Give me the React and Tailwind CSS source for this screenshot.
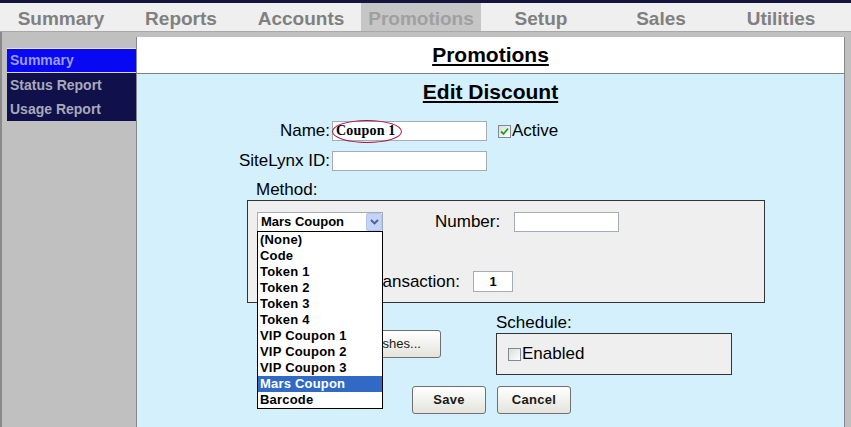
import React from 'react';

const tabs = ['Summary', 'Reports', 'Accounts', 'Promotions', 'Setup', 'Sales', 'Utilities'];
const methods = ['(None)', 'Code', 'Token 1', 'Token 2', 'Token 3', 'Token 4', 'VIP Coupon 1', 'VIP Coupon 2', 'VIP Coupon 3', 'Mars Coupon', 'Barcode'];

// XP style checkbox
const CheckBox = ({ checked }) => (
  <span className="inline-flex w-[13px] h-[13px] shrink-0 items-center justify-center border border-[#7f8a99] bg-linear-to-br from-[#dcdcd7] to-white">
    {checked && (
      <svg width="9" height="9" viewBox="0 0 9 9">
        <path d="M1 4.5 L3.5 7 L8 1.5" stroke="#21a121" strokeWidth="1.8" fill="none" />
      </svg>
    )}
  </span>
);

const XpButton = ({ children, className = '' }) => (
  <button className={`h-[28px] rounded-[3px] border border-[#707070] bg-linear-to-b from-white to-[#e4e4dc] text-[13px] text-[#1a1a1a] ${className}`}>
    {children}
  </button>
);

const TextInput = ({ className = '', children }) => (
  <div className={`relative h-[20px] bg-white border border-[#a5acb5] ${className}`}>{children}</div>
);

export default function App() {
  return (
    <div className="w-[851px] h-[427px] overflow-hidden bg-[#c0c0c0] font-['Liberation_Sans',Arial,sans-serif] text-black flex flex-col">
      {/* top strip + tabs */}
      <div className="h-[3px] bg-[#14143c]" />
      <div className="h-[29px] bg-[#efefef] border-b border-[#a8a8a8] flex pl-[1px]">
        {tabs.map((t) => (
          <div
            key={t}
            className={`w-[120px] pt-[4px] flex items-center justify-center text-[19px] font-bold ${t === 'Promotions' ? 'bg-[#c6c6c6] text-[#a0a0a0]' : 'text-[#808080]'}`}
          >
            {t}
          </div>
        ))}
      </div>

      <div className="flex-1 flex border-l-2 border-[#8a8a8a]">
        {/* sidebar */}
        <div className="w-[134px] pl-[5px] pt-[16px]">
          <div className="border-t border-[#e4e4f0] text-[14px] font-bold">
            <div className="h-[24px] bg-[#0808f2] text-[#9c9cee] pl-[3px] flex items-center border-b border-[#d8d8ec]">Summary</div>
            <div className="h-[24px] bg-[#10104a] text-[#a9a9b9] pl-[3px] flex items-center">Status Report</div>
            <div className="h-[24px] bg-[#10104a] text-[#a9a9b9] pl-[3px] flex items-center">Usage Report</div>
          </div>
        </div>

        {/* main panel */}
        <div className="w-[709px] mt-[5px] flex flex-col border-x border-[#888888]">
          <div className="h-[37px] bg-white border-b border-[#808080] flex items-center justify-center">
            <span className="text-[21px] font-bold underline underline-offset-2">Promotions</span>
          </div>

          <div className="flex-1 bg-[#d4f0fd] flex flex-col">
            <div className="pt-[6px] text-center leading-[24px]">
              <span className="text-[21px] font-bold underline underline-offset-2">Edit Discount</span>
            </div>

            <div className="ml-[98px] flex flex-col text-[17px]">
              {/* Name */}
              <div className="mt-[15px] flex items-center h-[20px]">
                <span className="w-[95px] shrink-0 whitespace-nowrap text-right">Name:</span>
                <TextInput className="ml-[2px] w-[155px]">
                  <span className="absolute left-[3px] top-[0px] text-[14px] tracking-[0.2px] font-bold font-['Liberation_Serif','Times_New_Roman',serif] leading-[18px]">Coupon 1</span>
                  <span className="absolute -left-[1px] -top-[2px] w-[70px] h-[23px] rounded-[50%] border border-[#b0103a]" />
                </TextInput>
                <span className="ml-[11px] flex items-center gap-[1px]">
                  <CheckBox checked />
                  <span>Active</span>
                </span>
              </div>

              {/* SiteLynx */}
              <div className="mt-[10px] flex items-center h-[20px]">
                <span className="w-[95px] shrink-0 whitespace-nowrap text-right">SiteLynx ID:</span>
                <TextInput className="ml-[2px] w-[155px]" />
              </div>

              <div className="mt-[10px] h-[18px] leading-[18px] pl-[21px]">Method:</div>

              {/* Method box */}
              <div className="mt-[1px] ml-[12px] w-[518px] h-[103px] bg-[#efefef] border border-[#333333] pt-[11px] pl-[9px] flex flex-col">
                <div className="flex items-center h-[20px]">
                  <div className="relative w-[126px] h-[20px] bg-white border border-[#a5acb5] flex items-center z-10">
                    <span className="pl-[3px] text-[13px] font-bold flex-1">Mars Coupon</span>
                    <span className="w-[16px] h-[18px] bg-[#c3d3fa] border border-[#b4c6f0] rounded-[2px] flex items-center justify-center">
                      <svg width="9" height="6" viewBox="0 0 9 6">
                        <path d="M1 1 L4.5 4.5 L8 1" stroke="#4d6185" strokeWidth="1.8" fill="none" />
                      </svg>
                    </span>
                    <div className="absolute left-[-1px] top-[18px] w-[126px] bg-white border border-black">
                      {methods.map((m) => (
                        <div
                          key={m}
                          className={`h-[16px] leading-[16px] pl-[2px] text-[13px] font-bold tracking-[0.2px] ${m === 'Mars Coupon' ? 'bg-[#316ac5] text-white' : 'text-black'}`}
                        >
                          {m}
                        </div>
                      ))}
                    </div>
                  </div>
                  <span className="ml-[52px]">Number:</span>
                  <TextInput className="ml-[14px] w-[105px]" />
                </div>

                <div className="mt-[39px] flex items-center h-[21px]">
                  <span className="w-[203px] text-right">Per Transaction:</span>
                  <div className="ml-[13px] w-[40px] h-[21px] bg-white border border-[#a5acb5] flex items-center justify-center text-[13px] font-bold">1</div>
                </div>
              </div>

              {/* washes + schedule */}
              <div className="flex">
                <XpButton className="mt-[27px] ml-[79px] w-[127px] text-left pl-[24px]">Car Washes...</XpButton>
                <div className="ml-[55px] flex flex-col">
                  <div className="mt-[11px] h-[18px] leading-[18px]">Schedule:</div>
                  <div className="mt-[1px] w-[236px] h-[42px] bg-[#efefef] border border-[#333333] pl-[11px] flex items-center gap-[1px]">
                    <CheckBox />
                    <span>Enabled</span>
                  </div>
                </div>
              </div>

              <div className="mt-[11px] ml-[177px] flex gap-[11px]">
                <XpButton className="w-[74px] font-bold tracking-[0.3px]">Save</XpButton>
                <XpButton className="w-[74px] font-bold tracking-[0.3px]">Cancel</XpButton>
              </div>
            </div>
          </div>
        </div>
      </div>
    </div>
  );
}
